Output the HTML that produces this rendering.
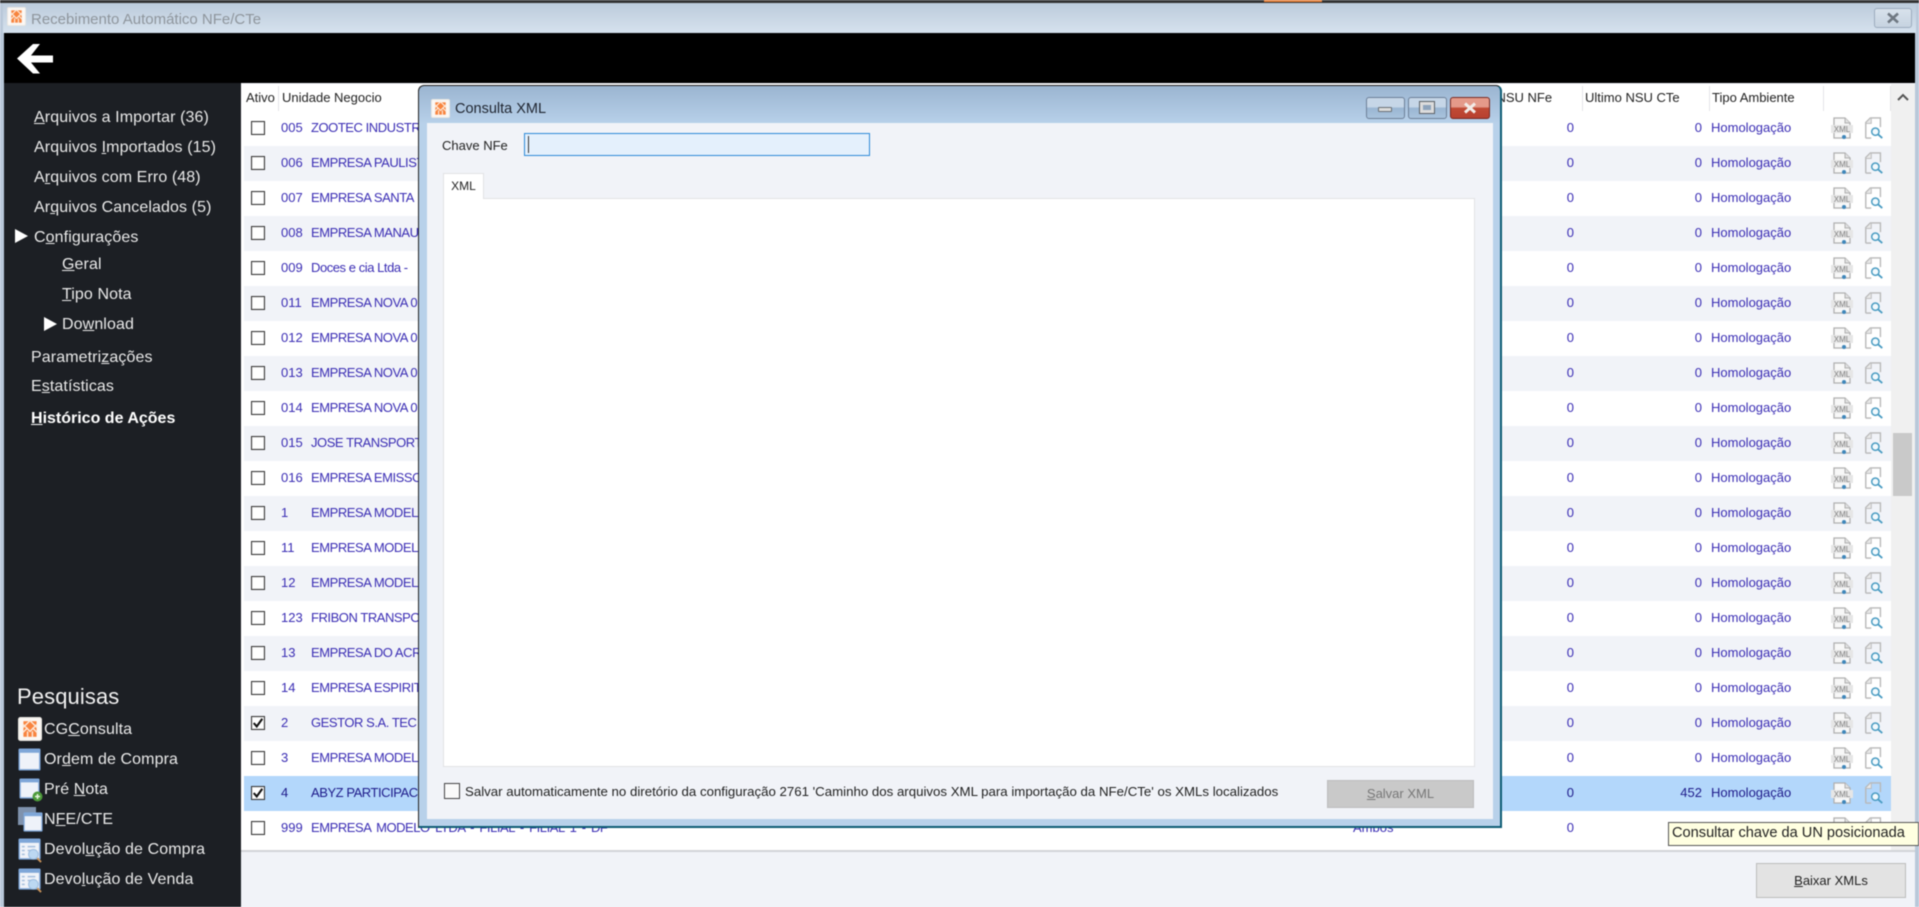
<!DOCTYPE html>
<html lang="pt-BR"><head><meta charset="utf-8"><title>Recebimento Automático NFe/CTe</title>
<style>
html,body{margin:0;padding:0;width:1919px;height:907px;overflow:hidden;background:#f1f3f8}
body{position:relative;font-family:"Liberation Sans","DejaVu Sans",sans-serif;font-size:13px;color:#222}
#all{position:absolute;left:0;top:0;width:1919px;height:907px;overflow:hidden;filter:blur(.5px)}
.a{position:absolute}
.t{position:absolute;white-space:nowrap;line-height:20px;height:20px}
.side .t{color:#e9e9e9;font-size:16px;letter-spacing:.1px}
.tri{position:absolute;width:0;height:0;border-left:13px solid #fff;border-top:7px solid transparent;border-bottom:7px solid transparent}
.hd{position:absolute;top:88px;line-height:20px;font-size:13px;color:#222;white-space:nowrap}
.sep{position:absolute;top:86px;width:1px;height:25px;background:#e4e4e8}
#rows{position:absolute;left:244px;top:111px;width:1647px}
.r{position:relative;height:35px;background:#fff;color:#3a2db4;line-height:33px;white-space:nowrap}
.r:nth-child(even){background:#f1f3f8}
.r.sel{background:#b3d7fb;color:#1d1a8a}
.r>span{position:absolute;top:0}
.r .c{left:7px;top:10px;width:12px;height:12px;border:1.5px solid #333;background:#fff;box-shadow:inset 0 0 0 1px #eee}
.r .k{left:37px}.r .n{left:67px;letter-spacing:-.45px}
.r .z{left:1200px;width:130px;text-align:right}
.r .y{left:1330px;width:128px;text-align:right}
.r .h{left:1467px}
.r svg{position:absolute;top:5px}
.r .i1{left:1586px}.r .i2{left:1619px}
</style></head><body>
<div id="all">
<svg width="0" height="0" style="position:absolute"><defs>
<symbol id="logo" viewBox="0 0 20 20"><rect x=".5" y=".5" width="19" height="19" rx="1.500" fill="#fbf8f5" stroke="#e9e6e1"/><rect x="4.500" y="3.500" width="11" height="13" fill="#f8843e"/><path d="M4 9l6-6 6 6M4 6l6 6 6-6M4 13l4-4M16 13l-4-4M8 17v-5M12 17v-5" stroke="#fde8d8" stroke-width="1.200" fill="none"/></symbol>
<symbol id="xml" viewBox="0 0 24 24"><path d="M4 9V2h11l5 5v2M4 17v5h16v-5" fill="#f8f8f8" stroke="#b0b0b0" stroke-width="1.300"/><path d="M15 2v5h5" fill="#e0e0e0" stroke="#b0b0b0"/><rect x="1" y="9" width="22" height="8" fill="#e6e6e6"/><text x="12" y="16" font-size="8" text-anchor="middle" fill="#808080" font-family="Liberation Sans">XML</text><circle cx="14" cy="21" r="2" fill="#3f86ba"/></symbol>
<symbol id="mag" viewBox="0 0 24 24"><path d="M3 23V6l5-5h11v10M3 23h6" fill="none" stroke="#b8b8b8" stroke-width="1.500"/><path d="M3 7h6V1" fill="#e8e8e8" stroke="#b8b8b8"/><circle cx="13.500" cy="16" r="4" fill="#f2f9fd" stroke="#4a9cc2" stroke-width="1.600"/><path d="M16.500 19l4.500 4" stroke="#4a9cc2" stroke-width="2"/></symbol>
<symbol id="tick" viewBox="0 0 14 14"><path d="M2 7l3.500 4L12 2" fill="none" stroke="#111" stroke-width="2.400"/></symbol>
<symbol id="win" viewBox="0 0 24 24"><rect x=".5" y=".5" width="23" height="23" rx="1.500" fill="#7ea6d8"/><rect x="2" y="5" width="20" height="17" fill="#eef2f9"/></symbol>
<symbol id="dv" viewBox="0 0 26 26"><rect x=".5" y=".5" width="23" height="22" rx="1.500" fill="#7ea6d8"/><rect x="2" y="5" width="20" height="16" fill="#f0f3f9"/><path d="M4 9h3M4 13h3M4 17h3M10 9h8M10 13h4" stroke="#a5bedd" stroke-width="1.600"/><circle cx="16" cy="17" r="5" fill="#bcd8f2" stroke="#9cbde0"/><path d="M20 21l4 4" stroke="#c9935a" stroke-width="2"/></symbol>
</defs></svg>

<!-- window frame -->
<div class="a" style="left:0;top:0;width:1919px;height:907px;background:#b9c8d9"></div>
<div class="a" style="left:0;top:0;width:1919px;height:3px;background:#333"></div>
<div class="a" style="left:1264px;top:0;width:58px;height:2px;background:#e8823c"></div>
<div class="a" style="left:3px;top:3px;width:1913px;height:30px;background:linear-gradient(#bccbdb,#d6e2ee)"></div>
<svg class="a" style="left:7px;top:7px" width="19" height="19"><use href="#logo"/></svg>
<div class="t" style="left:31px;top:10px;font-size:15px;color:#8e959c">Recebimento Automático NFe/CTe</div>
<div class="a" style="left:1874px;top:8px;width:38px;height:20px;border:1px solid #9cacbe;border-radius:3px;background:linear-gradient(#d8e2ec,#c6d3e0);box-sizing:border-box"></div>
<svg class="a" style="left:1886px;top:12px" width="14" height="12"><path d="M2 1.500l10 9M12 1.500l-10 9" stroke="#6f7882" stroke-width="2.600"/></svg>

<div class="a" style="left:4px;top:33px;width:1911px;height:50px;background:#000"></div>
<svg class="a" style="left:16px;top:43px" width="38" height="32"><path d="M1 15.500L17 1h7l-9 11.500h22v7H15l9 11h-7z" fill="#fff"/></svg>

<!-- content -->
<div class="a" style="left:241px;top:83px;width:1674px;height:824px;background:#f1f3f8"></div>
<div class="a" style="left:241px;top:84px;width:1650px;height:766px;background:#fff"></div>
<div class="a" style="left:241px;top:850px;width:1674px;height:2px;background:#d2d4d8"></div>
<div class="a" style="left:1891px;top:84px;width:24px;height:766px;background:#f0f0f0"></div>
<svg class="a" style="left:1896px;top:92px" width="14" height="10"><path d="M2 8l5-5 5 5" fill="none" stroke="#555" stroke-width="2"/></svg>
<div class="a" style="left:1893px;top:433px;width:19px;height:63px;background:#c9c9c9"></div>

<div class="hd" style="left:246px">Ativo</div><div class="sep" style="left:278px"></div>
<div class="hd" style="left:282px">Unidade Negocio</div>
<div class="hd" style="left:1456px">Ultimo NSU NFe</div><div class="sep" style="left:1582px"></div>
<div class="hd" style="left:1585px">Ultimo NSU CTe</div><div class="sep" style="left:1709px"></div>
<div class="hd" style="left:1712px">Tipo Ambiente</div><div class="sep" style="left:1823px"></div><div class="sep" style="left:1890px"></div>

<div id="rows">
<div class="r"><span class="c"></span><span class="k">005</span><span class="n">ZOOTEC INDUSTRIA</span><span class="z">0</span><span class="y">0</span><span class="h">Homologação</span><svg class="i1" width="24" height="24"><use href="#xml"/></svg><svg class="i2" width="22" height="24"><use href="#mag"/></svg></div>
<div class="r"><span class="c"></span><span class="k">006</span><span class="n">EMPRESA PAULISTA</span><span class="z">0</span><span class="y">0</span><span class="h">Homologação</span><svg class="i1" width="24" height="24"><use href="#xml"/></svg><svg class="i2" width="22" height="24"><use href="#mag"/></svg></div>
<div class="r"><span class="c"></span><span class="k">007</span><span class="n">EMPRESA SANTA</span><span class="z">0</span><span class="y">0</span><span class="h">Homologação</span><svg class="i1" width="24" height="24"><use href="#xml"/></svg><svg class="i2" width="22" height="24"><use href="#mag"/></svg></div>
<div class="r"><span class="c"></span><span class="k">008</span><span class="n">EMPRESA MANAUS</span><span class="z">0</span><span class="y">0</span><span class="h">Homologação</span><svg class="i1" width="24" height="24"><use href="#xml"/></svg><svg class="i2" width="22" height="24"><use href="#mag"/></svg></div>
<div class="r"><span class="c"></span><span class="k">009</span><span class="n">Doces e cia Ltda -</span><span class="z">0</span><span class="y">0</span><span class="h">Homologação</span><svg class="i1" width="24" height="24"><use href="#xml"/></svg><svg class="i2" width="22" height="24"><use href="#mag"/></svg></div>
<div class="r"><span class="c"></span><span class="k">011</span><span class="n">EMPRESA NOVA 0</span><span class="z">0</span><span class="y">0</span><span class="h">Homologação</span><svg class="i1" width="24" height="24"><use href="#xml"/></svg><svg class="i2" width="22" height="24"><use href="#mag"/></svg></div>
<div class="r"><span class="c"></span><span class="k">012</span><span class="n">EMPRESA NOVA 0</span><span class="z">0</span><span class="y">0</span><span class="h">Homologação</span><svg class="i1" width="24" height="24"><use href="#xml"/></svg><svg class="i2" width="22" height="24"><use href="#mag"/></svg></div>
<div class="r"><span class="c"></span><span class="k">013</span><span class="n">EMPRESA NOVA 0</span><span class="z">0</span><span class="y">0</span><span class="h">Homologação</span><svg class="i1" width="24" height="24"><use href="#xml"/></svg><svg class="i2" width="22" height="24"><use href="#mag"/></svg></div>
<div class="r"><span class="c"></span><span class="k">014</span><span class="n">EMPRESA NOVA 0</span><span class="z">0</span><span class="y">0</span><span class="h">Homologação</span><svg class="i1" width="24" height="24"><use href="#xml"/></svg><svg class="i2" width="22" height="24"><use href="#mag"/></svg></div>
<div class="r"><span class="c"></span><span class="k">015</span><span class="n">JOSE TRANSPORTE</span><span class="z">0</span><span class="y">0</span><span class="h">Homologação</span><svg class="i1" width="24" height="24"><use href="#xml"/></svg><svg class="i2" width="22" height="24"><use href="#mag"/></svg></div>
<div class="r"><span class="c"></span><span class="k">016</span><span class="n">EMPRESA EMISSO</span><span class="z">0</span><span class="y">0</span><span class="h">Homologação</span><svg class="i1" width="24" height="24"><use href="#xml"/></svg><svg class="i2" width="22" height="24"><use href="#mag"/></svg></div>
<div class="r"><span class="c"></span><span class="k">1</span><span class="n">EMPRESA MODELO</span><span class="z">0</span><span class="y">0</span><span class="h">Homologação</span><svg class="i1" width="24" height="24"><use href="#xml"/></svg><svg class="i2" width="22" height="24"><use href="#mag"/></svg></div>
<div class="r"><span class="c"></span><span class="k">11</span><span class="n">EMPRESA MODELO</span><span class="z">0</span><span class="y">0</span><span class="h">Homologação</span><svg class="i1" width="24" height="24"><use href="#xml"/></svg><svg class="i2" width="22" height="24"><use href="#mag"/></svg></div>
<div class="r"><span class="c"></span><span class="k">12</span><span class="n">EMPRESA MODELO</span><span class="z">0</span><span class="y">0</span><span class="h">Homologação</span><svg class="i1" width="24" height="24"><use href="#xml"/></svg><svg class="i2" width="22" height="24"><use href="#mag"/></svg></div>
<div class="r"><span class="c"></span><span class="k">123</span><span class="n">FRIBON TRANSPO</span><span class="z">0</span><span class="y">0</span><span class="h">Homologação</span><svg class="i1" width="24" height="24"><use href="#xml"/></svg><svg class="i2" width="22" height="24"><use href="#mag"/></svg></div>
<div class="r"><span class="c"></span><span class="k">13</span><span class="n">EMPRESA DO ACRE</span><span class="z">0</span><span class="y">0</span><span class="h">Homologação</span><svg class="i1" width="24" height="24"><use href="#xml"/></svg><svg class="i2" width="22" height="24"><use href="#mag"/></svg></div>
<div class="r"><span class="c"></span><span class="k">14</span><span class="n">EMPRESA ESPIRITO</span><span class="z">0</span><span class="y">0</span><span class="h">Homologação</span><svg class="i1" width="24" height="24"><use href="#xml"/></svg><svg class="i2" width="22" height="24"><use href="#mag"/></svg></div>
<div class="r"><span class="c"><svg style="left:0;top:0" width="12" height="12"><use href="#tick"/></svg></span><span class="k">2</span><span class="n">GESTOR S.A. TEC</span><span class="z">0</span><span class="y">0</span><span class="h">Homologação</span><svg class="i1" width="24" height="24"><use href="#xml"/></svg><svg class="i2" width="22" height="24"><use href="#mag"/></svg></div>
<div class="r"><span class="c"></span><span class="k">3</span><span class="n">EMPRESA MODELO</span><span class="z">0</span><span class="y">0</span><span class="h">Homologação</span><svg class="i1" width="24" height="24"><use href="#xml"/></svg><svg class="i2" width="22" height="24"><use href="#mag"/></svg></div>
<div class="r sel"><span class="c"><svg style="left:0;top:0" width="12" height="12"><use href="#tick"/></svg></span><span class="k">4</span><span class="n">ABYZ PARTICIPACOES</span><span class="z">0</span><span class="y">452</span><span class="h">Homologação</span><svg class="i1" width="24" height="24"><use href="#xml"/></svg><svg class="i2" width="22" height="24"><use href="#mag"/></svg></div>
<div class="r"><span class="c"></span><span class="k">999</span><span class="n" style="word-spacing:2.200px">EMPRESA MODELO LTDA - FILIAL - FILIAL 1 - DF</span><span style="left:1109px">Ambos</span><span class="z">0</span><span class="y">0</span><span class="h">Homologação</span><svg class="i1" width="24" height="24"><use href="#xml"/></svg><svg class="i2" width="22" height="24"><use href="#mag"/></svg></div>
</div>

<!-- sidebar -->
<div class="a side" style="left:4px;top:83px;width:237px;height:824px;background:#1c1f24"></div>
<div class="side">
<div class="t" style="left:34px;top:108px"><u>A</u>rquivos a Importar (36)</div>
<div class="t" style="left:34px;top:138px">Arquivos <u>I</u>mportados (15)</div>
<div class="t" style="left:34px;top:168px">A<u>r</u>quivos com Erro (48)</div>
<div class="t" style="left:34px;top:198px">Ar<u>q</u>uivos Cancelados (5)</div>
<div class="tri" style="left:15px;top:229px"></div>
<div class="t" style="left:34px;top:228px">C<u>o</u>nfigurações</div>
<div class="t" style="left:62px;top:255px"><u>G</u>eral</div>
<div class="t" style="left:62px;top:285px"><u>T</u>ipo Nota</div>
<div class="tri" style="left:44px;top:317px"></div>
<div class="t" style="left:62px;top:315px">Do<u>w</u>nload</div>
<div class="t" style="left:31px;top:348px">Parametri<u>z</u>ações</div>
<div class="t" style="left:31px;top:377px">E<u>s</u>tatísticas</div>
<div class="t" style="left:31px;top:409px;font-weight:bold;color:#fff;letter-spacing:0"><u>H</u>istórico de Ações</div>
<div class="t" style="left:17px;top:687px;font-size:22px;color:#f2f2f2">Pesquisas</div>
<div class="t" style="left:44px;top:720px">CG<u>C</u>onsulta</div>
<div class="t" style="left:44px;top:750px">Or<u>d</u>em de Compra</div>
<div class="t" style="left:44px;top:780px">Pré <u>N</u>ota</div>
<div class="t" style="left:44px;top:810px">N<u>F</u>E/CTE</div>
<div class="t" style="left:44px;top:840px">Devol<u>u</u>ção de Compra</div>
<div class="t" style="left:44px;top:870px">Devo<u>l</u>ução de Venda</div>
</div>
<svg class="a" style="left:18px;top:717px" width="24" height="24"><use href="#logo"/></svg>
<svg class="a" style="left:18px;top:748px" width="23" height="23"><use href="#win"/></svg>
<svg class="a" style="left:18px;top:778px" width="23" height="21"><use href="#win"/></svg>
<svg class="a" style="left:32px;top:791px" width="11" height="11"><circle cx="5.500" cy="5.500" r="5" fill="#4c9a3a"/><path d="M5.500 3v5M3 5.500h5" stroke="#e8f5e0" stroke-width="1.500"/></svg>
<div class="a" style="left:18px;top:807px;width:18px;height:18px;background:#7f92ad"></div>
<svg class="a" style="left:23px;top:812px" width="20" height="20"><use href="#win"/></svg>
<svg class="a" style="left:18px;top:838px" width="25" height="25"><use href="#dv"/></svg>
<svg class="a" style="left:18px;top:868px" width="25" height="25"><use href="#dv"/></svg>

<!-- bottom button -->
<div class="a" style="left:1756px;top:863px;width:150px;height:35px;background:#e3e3e3;border:1px solid #bcbcbc;box-sizing:border-box;text-align:center;line-height:33px;color:#222"><u>B</u>aixar XMLs</div>

<!-- dialog -->
<div class="a" style="left:418px;top:85px;width:1084px;height:743px;box-sizing:border-box;border:1px solid #222;border-right:2px solid #0d5c74;border-bottom:2px solid #0d5c74;border-radius:6px 6px 0 0;background:linear-gradient(#9bb5d1 0,#b8d1ea 38px,#b8d1ea 100%)"></div>
<svg class="a" style="left:431px;top:99px" width="19" height="19"><use href="#logo"/></svg>
<div class="t" style="left:455px;top:99px;font-size:14.500px;color:#1f2530">Consulta XML</div>
<div class="a" style="left:1366px;top:97px;width:39px;height:22px;box-sizing:border-box;border:1px solid #6d8098;border-radius:3px;background:linear-gradient(#c6d6e7 45%,#9ab6d3 50%,#a9c3dd)"></div>
<div class="a" style="left:1378px;top:107px;width:14px;height:5px;box-sizing:border-box;background:#dcdcdc;border:1px solid #6a7076;border-radius:1px"></div>
<div class="a" style="left:1408px;top:97px;width:39px;height:22px;box-sizing:border-box;border:1px solid #6d8098;border-radius:3px;background:linear-gradient(#c6d6e7 45%,#9ab6d3 50%,#a9c3dd)"></div>
<div class="a" style="left:1420px;top:102px;width:14px;height:11px;box-sizing:border-box;border:3px solid #dcdcdc;outline:1px solid #5c6268;background:#8ea4bc"></div>
<div class="a" style="left:1450px;top:97px;width:40px;height:22px;box-sizing:border-box;border:1px solid #7a2a22;border-radius:3px;background:linear-gradient(#e49a8a 45%,#c04a35 50%,#b8402f)"></div>
<svg class="a" style="left:1463px;top:102px" width="14" height="12"><path d="M2 1.500l10 9M12 1.500l-10 9" stroke="#f2ece8" stroke-width="3"/></svg>

<div class="a" style="left:427px;top:123px;width:1066px;height:696px;background:#f1f3f8"></div>
<div class="t" style="left:442px;top:136px">Chave NFe</div>
<div class="a" style="left:524px;top:133px;width:346px;height:23px;box-sizing:border-box;border:1px solid #2c8ad8;background:#e4f0fc"></div>
<div class="a" style="left:528px;top:136px;width:1px;height:17px;background:#333"></div>
<div class="a" style="left:443px;top:198px;width:1032px;height:569px;box-sizing:border-box;border:1px solid #e2e2e4;background:#fff"></div>
<div class="a" style="left:443px;top:173px;width:41px;height:26px;box-sizing:border-box;border:1px solid #e2e2e4;border-bottom:0;background:#fff;text-align:center;line-height:24px;font-size:12px;color:#222">XML</div>
<div class="a" style="left:444px;top:783px;width:16px;height:16px;box-sizing:border-box;border:1.500px solid #444;background:#fafafa"></div>
<div class="t" style="left:465px;top:782px;font-size:13.260px;color:#222">Salvar automaticamente no diretório da configuração 2761 'Caminho dos arquivos XML para importação da NFe/CTe' os XMLs localizados</div>
<div class="a" style="left:1327px;top:780px;width:147px;height:28px;box-sizing:border-box;border:1px solid #bdbdbd;background:#c9c9c9;text-align:center;line-height:26px;color:#777"><u>S</u>alvar XML</div>

<!-- tooltip -->
<div class="a" style="left:1668px;top:822px;width:251px;height:24px;box-sizing:border-box;border:1px solid #555;background:#ffffe1;line-height:21px;padding-left:3px;font-size:14.600px;color:#222;white-space:nowrap">Consultar chave da UN posicionada</div>
</div>
</body></html>
